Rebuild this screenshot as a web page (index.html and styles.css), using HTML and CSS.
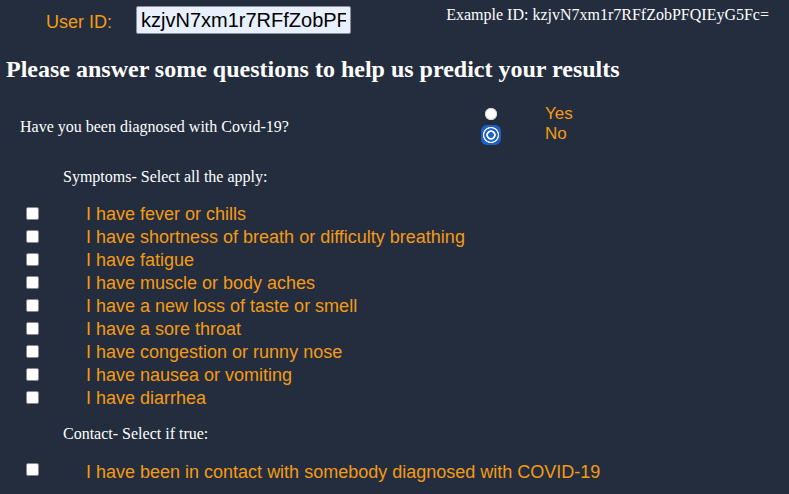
FILE: index.html
```html
<!DOCTYPE html>
<html lang="en">
<head>
<meta charset="utf-8">
<title>Covid-19 questionnaire</title>
<link rel="stylesheet" href="styles.css">
</head>
<body>
<div class="top">
  <label class="uid-label" for="uid">User ID:</label>
  <input id="uid" class="uid-input" type="text" value="kzjvN7xm1r7RFfZobPFQIEyG5Fc=">
  <div class="example">Example ID: kzjvN7xm1r7RFfZobPFQIEyG5Fc=</div>
</div>

<h2 class="heading">Please answer some questions to help us predict your results</h2>

<div class="q">
  <p class="q-text">Have you been diagnosed with Covid-19?</p>
  <div class="radios">
    <span class="radio"></span><span class="opt">Yes</span>
    <span class="radio radio-on"></span><span class="opt">No</span>
  </div>
</div>

<p class="section">Symptoms- Select all the apply:</p>

<ul class="list">
  <li class="row"><span class="box"></span><span class="lbl">I have fever or chills</span></li>
  <li class="row"><span class="box"></span><span class="lbl">I have shortness of breath or difficulty breathing</span></li>
  <li class="row"><span class="box"></span><span class="lbl">I have fatigue</span></li>
  <li class="row"><span class="box"></span><span class="lbl">I have muscle or body aches</span></li>
  <li class="row"><span class="box"></span><span class="lbl">I have a new loss of taste or smell</span></li>
  <li class="row"><span class="box"></span><span class="lbl">I have a sore throat</span></li>
  <li class="row"><span class="box"></span><span class="lbl">I have congestion or runny nose</span></li>
  <li class="row"><span class="box"></span><span class="lbl">I have nausea or vomiting</span></li>
  <li class="row"><span class="box"></span><span class="lbl">I have diarrhea</span></li>
</ul>

<p class="section section-contact">Contact- Select if true:</p>

<ul class="list list-contact">
  <li class="row"><span class="box box-high"></span><span class="lbl">I have been in contact with somebody diagnosed with COVID-19</span></li>
</ul>
</body>
</html>
```

FILE: styles.css
```css
html, body {
  margin: 0;
  padding: 0;
  background: #232d3e;
  height: 100%;
}
body {
  font-family: "Liberation Serif", "Times New Roman", serif;
  color: #ffffff;
  overflow: hidden;
}

.top {
  display: flex;
  align-items: flex-start;
  height: 40px;
  padding-top: 6px;
  box-sizing: border-box;
}
.uid-label {
  font-family: "Liberation Sans", Arial, sans-serif;
  font-size: 18px;
  line-height: 28px;
  color: #f49b14;
  margin-left: 46px;
  margin-top: 2px;
  width: 90px;
}
.uid-input {
  box-sizing: border-box;
  width: 215px;
  height: 28px;
  margin: 0;
  padding: 0 4px;
  border: 1px solid #8a8f98;
  border-radius: 2px;
  background: #e8f0fe;
  font-family: "Liberation Sans", Arial, sans-serif;
  font-size: 20px;
  color: #000;
  outline: none;
}
.example {
  margin-left: auto;
  margin-right: 20px;
  font-size: 16px;
  line-height: 18px;
}

.heading {
  margin: 15px 0 0;
  padding-left: 6px;
  font-size: 24px;
  line-height: 28px;
  font-weight: bold;
}

.q {
  display: flex;
  align-items: flex-start;
  margin-top: 21px;
}
.q-text {
  margin: 14px 0 0;
  padding-left: 20px;
  width: 461px;
  font-size: 16px;
  line-height: 18px;
}
.radios {
  display: grid;
  grid-template-columns: 20px auto;
  grid-template-rows: 20px 21px;
  column-gap: 44px;
  align-items: center;
  justify-items: center;
}
.radio {
  width: 12px;
  height: 12px;
  border-radius: 50%;
  background: #ffffff;
  box-shadow: inset 0 0 0 1px #d6d6d6;
}
.radio-on {
  width: 20px;
  height: 20px;
  border-radius: 6px;
  box-shadow: none;
  background: radial-gradient(circle, #1d61c7 0 2.6px, #ffffff 3.2px 4.4px, #1d61c7 5px 6.4px, #e9eef7 7px 7.8px, #1d61c7 8.4px);
}
.opt {
  justify-self: start;
  align-self: start;
  font-family: "Liberation Sans", Arial, sans-serif;
  font-size: 17px;
  line-height: 16px;
  margin-top: 2px;
  color: #f49b14;
}

.section {
  margin: 23px 0 0;
  padding-left: 63px;
  font-size: 16px;
  line-height: 18px;
}
.section-contact {
  margin-top: 15px;
}

.list {
  list-style: none;
  margin: 17px 0 0;
  padding: 0;
}
.list-contact {
  margin-top: 18px;
}
.row {
  display: flex;
  align-items: center;
  height: 23px;
}
.box {
  box-sizing: border-box;
  width: 13px;
  height: 13px;
  margin-left: 26px;
  margin-right: 47px;
  margin-bottom: 2px;
  background: #ffffff;
  border: 1px solid #8a8a8a;
  border-radius: 2px;
}
.box-high {
  margin-bottom: 6px;
}
.lbl {
  font-family: "Liberation Sans", Arial, sans-serif;
  font-size: 18px;
  line-height: 23px;
  color: #f49b14;
  white-space: nowrap;
}
```
